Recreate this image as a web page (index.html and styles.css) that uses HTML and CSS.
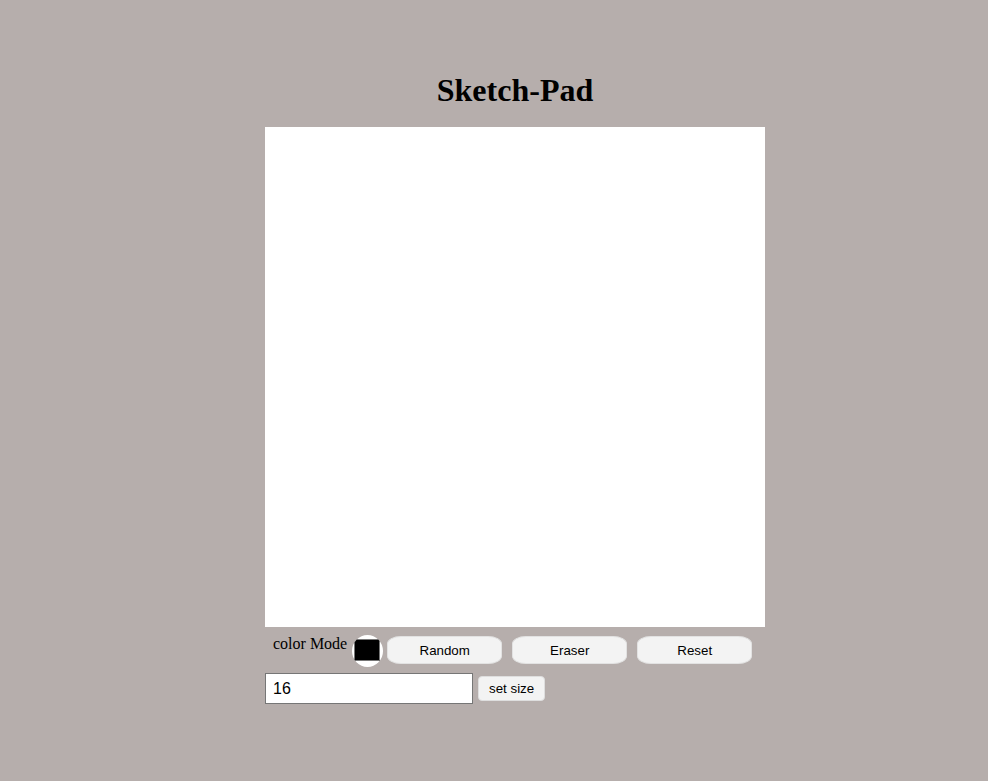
FILE: index.html
```html
<!DOCTYPE html>
<html lang="en">
<head>
<meta charset="utf-8">
<title>Sketch-Pad</title>
<link rel="stylesheet" href="styles.css">
</head>
<body>
  <div class="app">
    <h1 class="title">Sketch-Pad</h1>
    <div class="pad"></div>
    <div class="controls">
      <label class="mode-label" for="color">color Mode</label>
      <input class="color-picker" id="color" type="color" value="#000000">
      <button class="mode-btn first">Random</button>
      <button class="mode-btn">Eraser</button>
      <button class="mode-btn">Reset</button>
    </div>
    <div class="size-row">
      <input class="size-input" type="text" value="16">
      <button class="size-btn">set size</button>
    </div>
  </div>
</body>
</html>
```
FILE: styles.css
```css
body {
  margin: 0;
  background: #b6aeac;
}

.app {
  width: 500px;
  margin-left: 265px;
  padding-top: 72px;
}

.title {
  margin: 0 0 18px;
  font-family: "Liberation Serif", "Times New Roman", serif;
  font-size: 32px;
  font-weight: bold;
  line-height: 37px;
  text-align: center;
  color: #000;
}

.pad {
  width: 500px;
  height: 500px;
  background: #fff;
}

.controls {
  display: flex;
  align-items: flex-start;
  padding-left: 8px;
}

.mode-label {
  margin-top: 8px;
  font-family: "Liberation Serif", "Times New Roman", serif;
  font-size: 16px;
  color: #000;
}

.color-picker {
  -webkit-appearance: none;
  appearance: none;
  box-sizing: border-box;
  width: 31px;
  height: 32px;
  margin: 8px 0 0 5px;
  padding: 0;
  border: none;
  border-radius: 50%;
  background: #fff;
}

.color-picker::-webkit-color-swatch-wrapper {
  padding: 4px 3px 6px 2px;
}

.color-picker::-webkit-color-swatch {
  border: 1px solid #777;
  border-radius: 0;
}

.mode-btn {
  box-sizing: border-box;
  width: 115px;
  height: 28px;
  margin: 9px 0 0 10px;
  padding: 0;
  border: 1px solid #e2e2e2;
  border-radius: 14px / 8px;
  background: #f3f3f3;
  font-family: "Liberation Sans", Arial, sans-serif;
  font-size: 13.333px;
  color: #000;
}

.mode-btn.first {
  margin-left: 4px;
}

.size-row {
  display: flex;
  align-items: center;
  margin-top: 6px;
}

.size-input {
  box-sizing: border-box;
  width: 208px;
  height: 31px;
  margin: 0;
  padding: 0 7px;
  border: 1px solid #767676;
  background: #fff;
  font-family: "Liberation Sans", Arial, sans-serif;
  font-size: 16px;
  color: #000;
}

.size-btn {
  box-sizing: border-box;
  height: 25px;
  margin: 0 0 0 5px;
  padding: 0 10px;
  border: 1px solid #dedede;
  border-radius: 4px;
  background: #f3f3f3;
  font-family: "Liberation Sans", Arial, sans-serif;
  font-size: 13.333px;
  color: #000;
}
```
